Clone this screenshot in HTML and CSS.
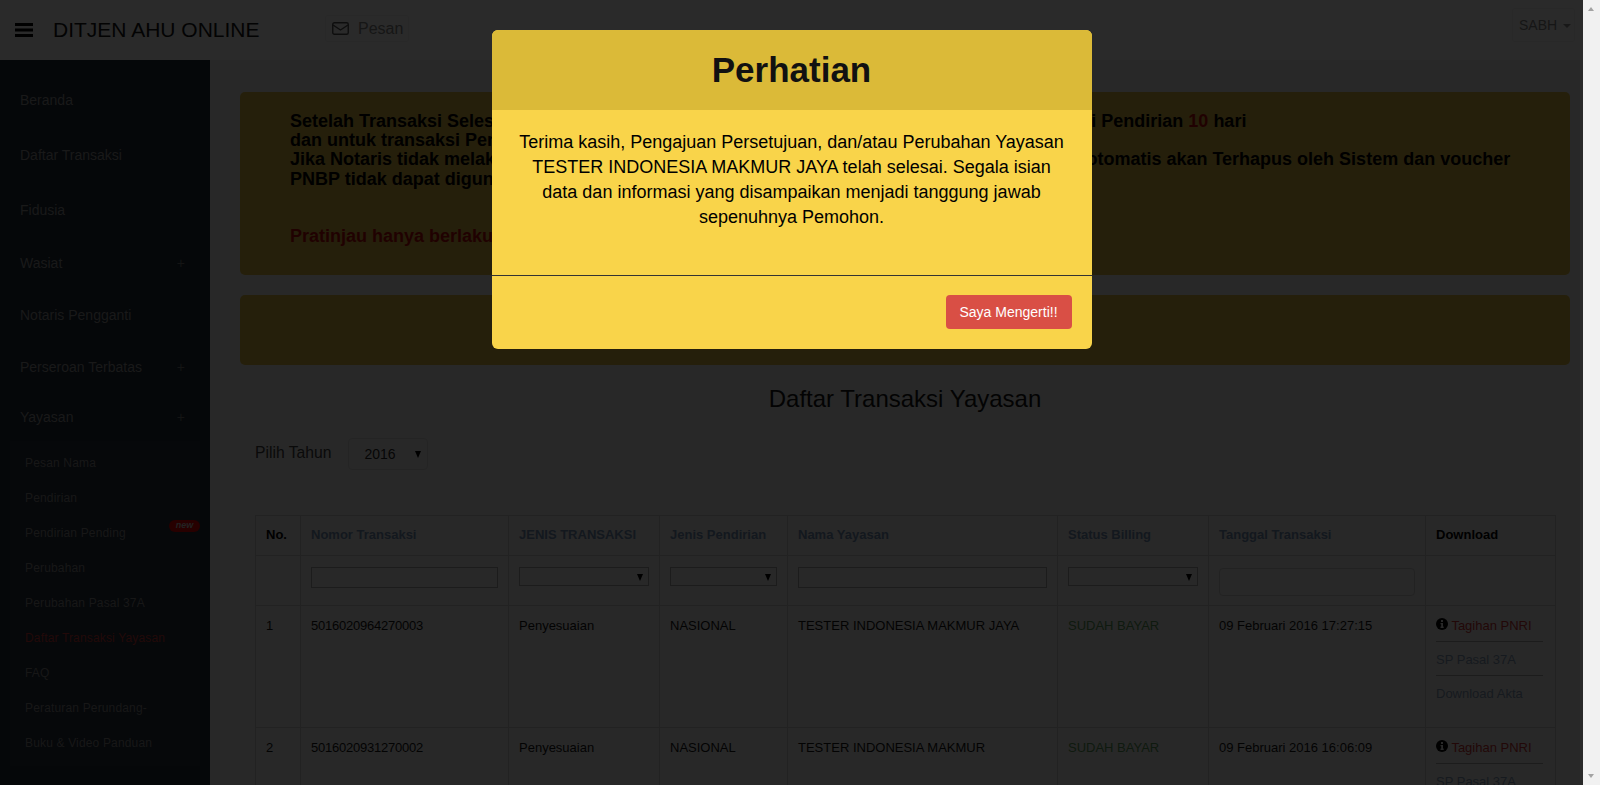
FILE: index.html
```html
<!DOCTYPE html>
<html lang="en">

<head>
  <meta charset="UTF-8">
  <title>Daftar Transaksi Yayasan - Ditjen AHU Online</title>
  <link rel="stylesheet" href="styles.css">
</head>

<body>
  <div class="window">
    <div class="page">

      <!-- Navbar -->
      <div class="navbar">
        <svg class="burger" width="18" height="14" viewBox="0 0 18 14"><path d="M0 0h18v3H0zM0 5.500h18v3H0zM0 11h18v3H0z" fill="#000"/></svg>
        <span class="brand">DITJEN AHU ONLINE</span>
        <a class="nav-btn pesan">
          <svg width="17" height="13" viewBox="0 0 17 13"><rect x="0.750" y="0.750" width="15.500" height="11.500" rx="1.500" fill="none" stroke="#444" stroke-width="1.400"/><path d="M1 3l7.500 5L16 3" fill="none" stroke="#444" stroke-width="1.400"/></svg>
          Pesan
        </a>
        <a class="nav-btn user">SABH <span class="caret"></span></a>
      </div>

      <div class="layout">

        <!-- Sidebar -->
        <div class="sidebar">
          <a class="side-item">Beranda</a>
          <a class="side-item">Daftar Transaksi</a>
          <a class="side-item">Fidusia</a>
          <a class="side-item short">Wasiat <span class="plus">+</span></a>
          <a class="side-item short">Notaris Pengganti</a>
          <a class="side-item tight">Perseroan Terbatas <span class="plus">+</span></a>
          <a class="side-item last">Yayasan <span class="plus">+</span></a>
          <div class="submenu">
            <a>Pesan Nama</a>
            <a>Pendirian</a>
            <a>Pendirian Pending <span class="badge-new">new</span></a>
            <a>Perubahan</a>
            <a>Perubahan Pasal 37A</a>
            <a class="active">Daftar Transaksi Yayasan</a>
            <a>FAQ</a>
            <a>Peraturan Perundang-</a>
            <a>Buku &amp; Video Panduan</a>
          </div>
        </div>

        <!-- Content -->
        <div class="content">
          <div class="alert-box">
            <p class="alert-text">
              Setelah Transaksi Selesai, Notaris diberikan batas waktu tertentu untuk Pembayaran transaksi Pendirian <span class="red">10</span> hari<br>
              dan untuk transaksi Perubahan 30 hari sejak tanggal Transaksi<br>
              Jika Notaris tidak melakukan Pembayaran pada batas waktu maka Transaksi tersebut secara otomatis akan Terhapus oleh Sistem dan voucher<br>
              PNBP tidak dapat digunakan kembali
            </p>
            <p class="alert-text red preview">Pratinjau hanya berlaku untuk transaksi yang telah selesai</p>
          </div>
          <div class="alert-box alert-empty"></div>

          <h2 class="page-title">Daftar Transaksi Yayasan</h2>

          <div class="year-filter">
            <label>Pilih Tahun</label>
            <div class="year-select">2016 <span class="arrow"></span></div>
          </div>

          <table class="trx-table">
            <colgroup>
              <col class="c-no"><col class="c-nomor"><col class="c-jenis"><col class="c-pendirian">
              <col class="c-nama"><col class="c-status"><col class="c-tanggal"><col class="c-download">
            </colgroup>
            <thead>
              <tr class="head-row">
                <th class="plain">No.</th>
                <th>Nomor Transaksi</th>
                <th>JENIS TRANSAKSI</th>
                <th>Jenis Pendirian</th>
                <th>Nama Yayasan</th>
                <th>Status Billing</th>
                <th>Tanggal Transaksi</th>
                <th class="plain">Download</th>
              </tr>
              <tr class="filter-row">
                <td></td>
                <td><div class="f-input"></div></td>
                <td><div class="f-select"><span class="arrow"></span></div></td>
                <td><div class="f-select"><span class="arrow"></span></div></td>
                <td><div class="f-input"></div></td>
                <td><div class="f-select"><span class="arrow"></span></div></td>
                <td><div class="f-date"></div></td>
                <td></td>
              </tr>
            </thead>
            <tbody>
              <tr class="data-row">
                <td>1</td>
                <td class="trx-no">5016020964270003</td>
                <td>Penyesuaian</td>
                <td>NASIONAL</td>
                <td>TESTER INDONESIA MAKMUR JAYA</td>
                <td class="paid">SUDAH BAYAR</td>
                <td>09 Februari 2016 17:27:15</td>
                <td>
                  <a class="dl-link bill">
                    <svg width="12" height="12" viewBox="0 0 12 12"><circle cx="6" cy="6" r="6" fill="#000"/><path d="M5 2h2v2H5zM4.500 5H7v3.500h.700V10H4.500V8.500h.700V6.300h-.700z" fill="#ccc"/></svg>
                    Tagihan PNRI
                  </a>
                  <a class="dl-link">SP Pasal 37A</a>
                  <a class="dl-link">Download Akta</a>
                </td>
              </tr>
              <tr class="data-row">
                <td>2</td>
                <td class="trx-no">5016020931270002</td>
                <td>Penyesuaian</td>
                <td>NASIONAL</td>
                <td>TESTER INDONESIA MAKMUR</td>
                <td class="paid">SUDAH BAYAR</td>
                <td>09 Februari 2016 16:06:09</td>
                <td>
                  <a class="dl-link bill">
                    <svg width="12" height="12" viewBox="0 0 12 12"><circle cx="6" cy="6" r="6" fill="#000"/><path d="M5 2h2v2H5zM4.500 5H7v3.500h.700V10H4.500V8.500h.700V6.300h-.700z" fill="#ccc"/></svg>
                    Tagihan PNRI
                  </a>
                  <a class="dl-link">SP Pasal 37A</a>
                </td>
              </tr>
            </tbody>
          </table>
        </div>
      </div>

      <!-- Modal -->
      <div class="modal">
        <div class="modal-content">
          <div class="modal-header">Perhatian</div>
          <div class="modal-body">
            Terima kasih, Pengajuan Persetujuan, dan/atau Perubahan Yayasan
            TESTER INDONESIA MAKMUR JAYA telah selesai. Segala isian
            data dan informasi yang disampaikan menjadi tanggung jawab
            sepenuhnya Pemohon.
          </div>
          <div class="modal-footer">
            <button class="btn-ok">Saya Mengerti!!</button>
          </div>
        </div>
      </div>
    </div>

    <!-- Scrollbar -->
    <div class="scrollbar">
      <span class="sb-up"></span>
      <span class="sb-down"></span>
    </div>
  </div>
</body>

</html>
```

FILE: styles.css
```css
html,
body {
  height: 100%;
  margin: 0;
  overflow: hidden;
}

body {
  font-family: "Liberation Sans", Arial, sans-serif;
  color: #000;
}

.window {
  display: flex;
  height: 785px;
}

.page {
  position: relative;
  width: 1583px;
  height: 785px;
  overflow: hidden;
  background: #c8c8c8;
}

/* Navbar */
.navbar {
  height: 60px;
  box-sizing: border-box;
  background: #d2d2d2;
  display: flex;
  align-items: flex-start;
  padding-left: 15px;
}

.burger {
  margin-top: 23px;
}

.brand {
  margin: 18px 0 0 20px;
  font-size: 21px;
  line-height: 23px;
  color: #111;
  width: 272px;
}

.nav-btn {
  border: 1px solid #c8c8c8;
  border-radius: 3px;
  box-sizing: border-box;
  color: #6e6e6e;
}

.pesan {
  margin-top: 15px;
  height: 27px;
  width: 84px;
  padding-left: 6px;
  font-size: 16px;
  line-height: 25px;
  display: flex;
  align-items: center;
  gap: 9px;
}

.user {
  margin: 8px 8px 0 auto;
  width: 63px;
  height: 34px;
  padding-left: 6px;
  font-size: 14px;
  line-height: 32px;
}

.caret {
  display: inline-block;
  margin-left: 2px;
  vertical-align: 2px;
  border-left: 4px solid transparent;
  border-right: 4px solid transparent;
  border-top: 4px solid #777;
}

.layout {
  display: flex;
  height: 725px;
}

/* Sidebar */
.sidebar {
  width: 210px;
  flex: none;
  box-sizing: border-box;
  padding-top: 12px;
  background: #19232e;
  color: #7c7c7c;
}

.side-item {
  display: flex;
  justify-content: space-between;
  align-items: center;
  height: 55px;
  box-sizing: border-box;
  padding: 0 25px 0 20px;
  font-size: 14px;
}

.side-item.short {
  height: 52px;
}

.side-item.tight {
  height: 51px;
}

.side-item.last {
  height: 49px;
}

.plus {
  font-size: 14px;
  color: #666;
}

.submenu {
  margin: 0 10px;
  padding: 5px 0;
  background: #1e2833;
}

.submenu a {
  position: relative;
  display: block;
  height: 35px;
  line-height: 35px;
  padding-left: 15px;
  font-size: 12px;
  letter-spacing: 0.16px;
  color: #737373;
}

.submenu a.active {
  color: #a83030;
}

.badge-new {
  position: absolute;
  right: 0;
  top: 4px;
  width: 31px;
  height: 12px;
  border-radius: 6px;
  background: #c00000;
  color: #aaa;
  font-size: 9px;
  font-weight: bold;
  font-style: italic;
  line-height: 10px;
  letter-spacing: 0;
  text-align: center;
}

/* Content */
.content {
  flex: 1;
  padding: 32px 13px 0 30px;
  min-width: 0;
}

.alert-box {
  height: 183px;
  box-sizing: border-box;
  padding: 20px 30px 0 50px;
  background: #b99b37;
  border-radius: 5px;
}

.alert-empty {
  height: 70px;
  margin-top: 20px;
}

.alert-text {
  margin: 0;
  font-size: 18px;
  font-weight: bold;
  line-height: 19.200px;
}

.preview {
  margin-top: 38px;
}

.red {
  color: #a00808;
}

.page-title {
  margin: 20px 0 0;
  font-size: 24px;
  font-weight: normal;
  line-height: 27px;
  text-align: center;
  color: #111;
}

.year-filter {
  display: flex;
  align-items: center;
  gap: 17px;
  margin: 26px 0 0 15px;
  font-size: 15.700px;
  color: #333;
}

.year-filter label {
  padding-bottom: 2px;
}

.year-select {
  position: relative;
  width: 80px;
  height: 32px;
  box-sizing: border-box;
  padding-left: 15px;
  border: 1px solid #b4b4b4;
  border-radius: 4px;
  font-size: 14px;
  line-height: 31px;
  color: #222;
}

.arrow {
  position: absolute;
  right: 6px;
  top: 50%;
  margin-top: -3px;
  border-left: 3.500px solid transparent;
  border-right: 3.500px solid transparent;
  border-top: 7px solid #000;
}

/* Table */
.trx-table {
  width: 1300px;
  margin: 45px 0 0 15px;
  table-layout: fixed;
  border-collapse: collapse;
  font-size: 13px;
}

.c-no { width: 45px; }
.c-nomor { width: 208px; }
.c-jenis { width: 151px; }
.c-pendirian { width: 128px; }
.c-nama { width: 270px; }
.c-status { width: 151px; }
.c-tanggal { width: 217px; }
.c-download { width: 130px; }

.trx-table th,
.trx-table td {
  border: 1px solid #a8a8a8;
  box-sizing: border-box;
  padding: 0 10px;
  text-align: left;
  vertical-align: top;
  white-space: nowrap;
  overflow: hidden;
}

.head-row th {
  height: 40px;
  padding-bottom: 2px;
  vertical-align: middle;
  color: #5f7896;
}

.head-row th.plain {
  color: #000;
}

.filter-row td {
  height: 50px;
  padding-top: 11px;
}

.f-input {
  height: 21px;
  box-sizing: border-box;
  border: 1px solid #8c8c8c;
}

.f-select {
  position: relative;
  height: 19px;
  box-sizing: border-box;
  border: 1px solid #8c8c8c;
}

.f-select .arrow {
  right: 5px;
}

.f-date {
  height: 28px;
  box-sizing: border-box;
  margin-top: 1px;
  border: 1px solid #a8a8a8;
  border-radius: 4px;
}

.data-row td {
  height: 122px;
  padding-top: 12px;
  line-height: 15px;
  color: #111;
}

.trx-table td.trx-no {
  letter-spacing: -0.230px;
}

.trx-table td.paid {
  color: #4a804a;
}

.dl-link {
  display: block;
  margin-right: 2px;
  padding-bottom: 8px;
  margin-bottom: 10px;
  border-bottom: 1px solid #8c8c8c;
  color: #6f8299;
}

.dl-link:last-child {
  border-bottom: none;
  margin-bottom: 0;
}

.dl-link.bill {
  color: #a82c2c;
}

/* Modal */
.modal {
  position: absolute;
  top: 0;
  left: 0;
  width: 100%;
  height: 100%;
  background: rgba(0, 0, 0, 0.8);
  display: flex;
  justify-content: center;
  align-items: flex-start;
}

.modal-content {
  width: 600px;
  height: 319px;
  margin-top: 30px;
  background: #f9d44a;
  border-radius: 6px;
  overflow: hidden;
  display: flex;
  flex-direction: column;
}

.modal-header {
  height: 80px;
  background: #dbba38;
  font-size: 35px;
  font-weight: bold;
  line-height: 80px;
  text-align: center;
  color: #111;
}

.modal-body {
  height: 166px;
  box-sizing: border-box;
  padding: 20px 25px 0;
  border-bottom: 1px solid #333;
  font-size: 18px;
  line-height: 25px;
  text-align: center;
}

.modal-footer {
  display: flex;
  justify-content: flex-end;
  padding: 19px 20px 0;
}

.btn-ok {
  width: 126px;
  height: 34px;
  border: none;
  border-radius: 4px;
  background: #d94f45;
  color: #fff;
  font-family: inherit;
  font-size: 14px;
}

/* Scrollbar */
.scrollbar {
  position: relative;
  width: 17px;
  height: 785px;
  background: #f1f1f1;
}

.sb-up,
.sb-down {
  position: absolute;
  left: 5px;
  border-left: 3.500px solid transparent;
  border-right: 3.500px solid transparent;
}

.sb-up {
  top: 7px;
  border-bottom: 4px solid #a3a3a3;
}

.sb-down {
  bottom: 7px;
  border-top: 4px solid #a3a3a3;
}
```
